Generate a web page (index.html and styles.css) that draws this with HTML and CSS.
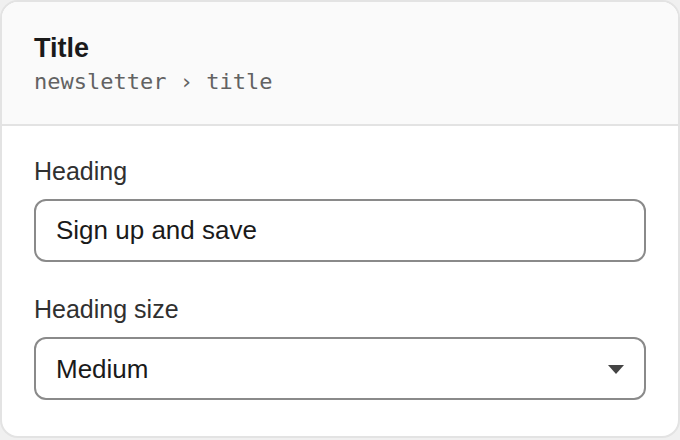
FILE: index.html
```html
<!DOCTYPE html>
<html>
<head>
    <title>Title settings</title>
    <link rel="stylesheet" href="styles.css">
</head>
<body>

<div class="panel">
    <div class="panel-header">
        <div class="panel-title">Title</div>
        <div class="panel-path">newsletter › title</div>
    </div>
    <div class="panel-body">
        <div class="field">
            <label for="heading">Heading</label>
            <input id="heading" type="text" value="Sign up and save">
        </div>
        <div class="field">
            <label for="heading-size">Heading size</label>
            <div class="select-wrap">
                <select id="heading-size">
                    <option>Small</option>
                    <option selected>Medium</option>
                    <option>Large</option>
                </select>
                <svg class="caret" width="16" height="9" viewBox="0 0 16 9">
                    <path d="M0 0 H16 L8 9 Z" fill="#444"/>
                </svg>
            </div>
        </div>
    </div>
</div>

</body>
</html>
```

FILE: styles.css
```css
body {
    margin: 0;
    background-color: #f0f0f0;
    font-family: "Liberation Sans", Arial, sans-serif;
}

.panel {
    box-sizing: border-box;
    width: 680px;
    height: 438px;
    border: 2px solid #e3e3e3;
    border-radius: 18px;
    background-color: #fff;
    overflow: hidden;
}

.panel-header {
    padding: 30px 32px 28px;
    background-color: #fafafa;
    border-bottom: 2px solid #e3e3e3;
}

.panel-title {
    font-size: 27px;
    line-height: 32px;
    font-weight: bold;
    color: #1a1a1a;
}

.panel-path {
    margin-top: 4px;
    font-family: "DejaVu Sans Mono", monospace;
    font-size: 22px;
    line-height: 28px;
    color: #626262;
}

.panel-body {
    display: flex;
    flex-direction: column;
    gap: 32px;
    padding: 30px 32px 36px;
}

.field {
    display: flex;
    flex-direction: column;
    gap: 13px;
}

.field label {
    font-size: 25px;
    line-height: 30px;
    color: #303030;
}

.field input,
.field select {
    box-sizing: border-box;
    width: 100%;
    height: 63px;
    margin: 0;
    padding: 0 20px;
    border: 2px solid #8a8a8a;
    border-radius: 12px;
    background-color: #fff;
    font-family: inherit;
    font-size: 26px;
    color: #1a1a1a;
    outline: none;
}

.field select {
    appearance: none;
}

.select-wrap {
    position: relative;
}

.caret {
    position: absolute;
    right: 22px;
    top: 28px;
    pointer-events: none;
}
```
